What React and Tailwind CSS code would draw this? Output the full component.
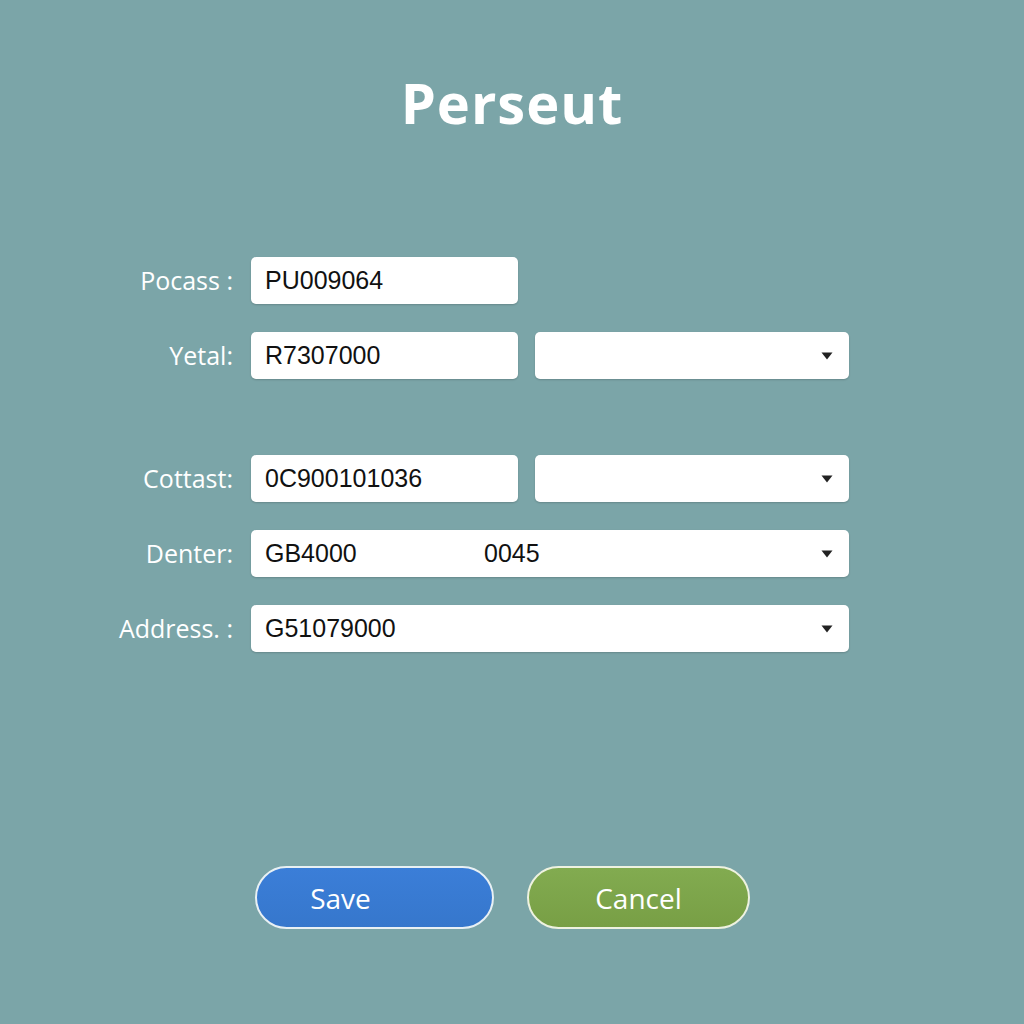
import React from 'react';

const Caret = () => (
  <svg width="12" height="8" viewBox="0 0 12 8" className="shrink-0">
    <path d="M0.5 0.5 L11.5 0.5 L6 7.5 Z" fill="#222" />
  </svg>
);

const Field = ({ value, width, select, children }) => (
  <div
    className={`h-[47px] ${width} bg-white rounded-[5px] shadow-[0_1px_2px_rgba(0,0,0,0.18)] flex items-center pl-[14px] pr-[16px] text-[25px] text-[#111] font-['Liberation_Sans',Arial,sans-serif]`}
  >
    <span className="flex-1 whitespace-pre">{children || value}</span>
    {select && <Caret />}
  </div>
);

const Row = ({ label, children, className = '' }) => (
  <div className={`flex items-center ${className}`}>
    <div className="w-[233px] text-right text-white text-[25px] whitespace-pre">{label}</div>
    <div className="ml-[18px] flex gap-[17px]">{children}</div>
  </div>
);

const App = () => {
  return (
    <div className="w-[1024px] h-[1024px] bg-[#7ba5a8] font-['Open_Sans','Lato',sans-serif] flex flex-col">
      <h1 className="mt-[66px] text-center text-white font-bold text-[56px] leading-[72px] tracking-[1px]">
        Perseut
      </h1>

      <div className="mt-[119px] flex flex-col">
        <Row label="Pocass :">
          <Field width="w-[267px]" value="PU009064" />
        </Row>
        <Row label="Yetal:" className="mt-[28px]">
          <Field width="w-[267px]" value="R7307000" />
          <Field width="w-[314px]" value="" select />
        </Row>
        <Row label="Cottast:" className="mt-[76px]">
          <Field width="w-[267px]" value="0C900101036" />
          <Field width="w-[314px]" value="" select />
        </Row>
        <Row label="Denter:" className="mt-[28px]">
          <Field width="w-[598px]" select>
            <span className="inline-block w-[219px]">GB4000</span>
            <span>0045</span>
          </Field>
        </Row>
        <Row label="Address. :" className="mt-[28px]">
          <Field width="w-[598px]" value="G51079000" select />
        </Row>
      </div>

      <div className="mt-[214px] flex pl-[255px] gap-[33px]">
        <button className="w-[239px] h-[63px] rounded-full border-2 border-[#e8f0f4] bg-gradient-to-b from-[#3b7ed8] to-[#3677cc] text-white text-[28px] pr-[68px]">
          Save
        </button>
        <button className="w-[223px] h-[63px] rounded-full border-2 border-[#eef2e0] bg-gradient-to-b from-[#82ab50] to-[#789f45] text-white text-[28px]">
          Cancel
        </button>
      </div>
    </div>
  );
};

export default App;
